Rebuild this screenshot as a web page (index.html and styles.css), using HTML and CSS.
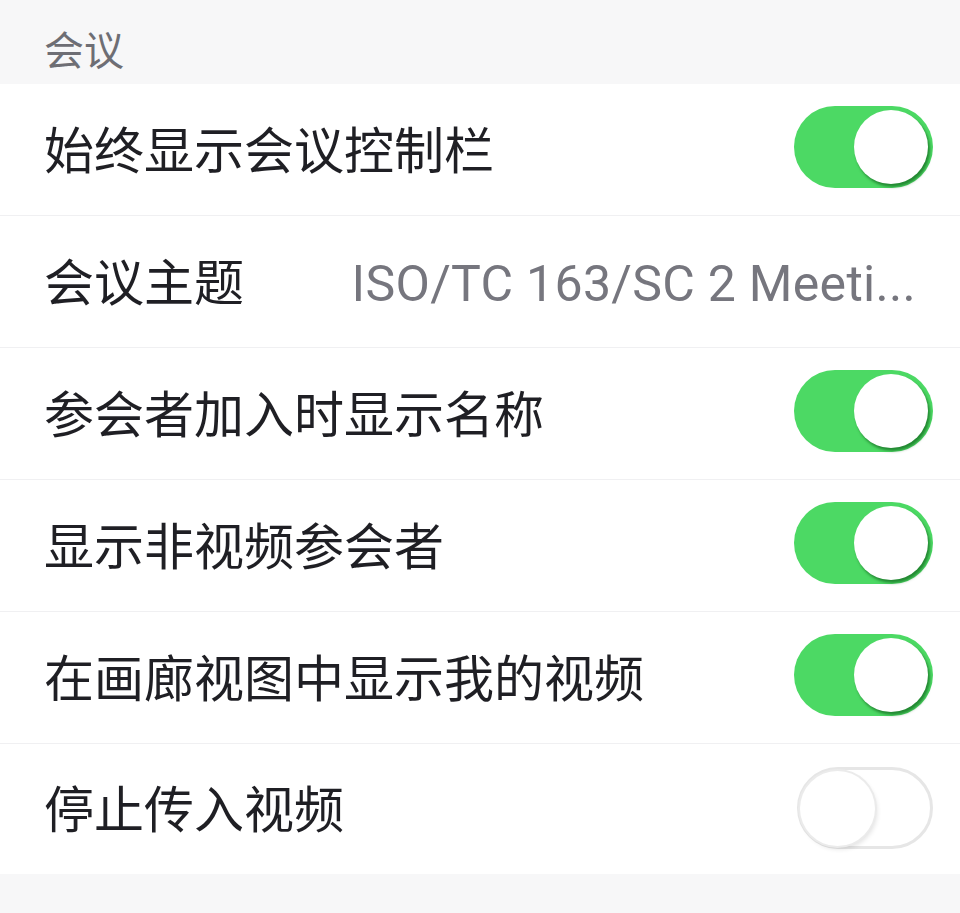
FILE: index.html
```html
<!DOCTYPE html>
<html lang="zh-CN">
<head>
<meta charset="utf-8">
<link rel="stylesheet" href="styles.css">
</head>
<body>
<div class="page">
  <div class="section-header">会议</div>
  <div class="list">
    <div class="row">
      <span class="label">始终显示会议控制栏</span>
      <span class="switch on"><span class="knob"></span></span>
    </div>
    <div class="row">
      <span class="label">会议主题</span>
      <span class="value">ISO/TC 163/SC 2 Meeti...</span>
    </div>
    <div class="row">
      <span class="label">参会者加入时显示名称</span>
      <span class="switch on"><span class="knob"></span></span>
    </div>
    <div class="row">
      <span class="label">显示非视频参会者</span>
      <span class="switch on"><span class="knob"></span></span>
    </div>
    <div class="row">
      <span class="label">在画廊视图中显示我的视频</span>
      <span class="switch on"><span class="knob"></span></span>
    </div>
    <div class="row last">
      <span class="label">停止传入视频</span>
      <span class="switch off"><span class="knob"></span></span>
    </div>
  </div>
</div>
</body>
</html>
```

FILE: styles.css
```css
html, body {
  margin: 0;
  padding: 0;
  background: #f7f7f8;
}
body {
  font-family: "Noto Sans CJK SC", "Noto Sans", sans-serif;
  width: 960px;
  height: 913px;
  overflow: hidden;
}
.page {
  display: flex;
  flex-direction: column;
}
.section-header {
  height: 84px;
  box-sizing: border-box;
  padding: 20px 0 0 44px;
  font-size: 40px;
  line-height: 56px;
  color: #6e6e74;
}
.list {
  background: #ffffff;
  display: flex;
  flex-direction: column;
}
.row {
  height: 132px;
  box-sizing: border-box;
  border-bottom: 1px solid #f0f0f2;
  display: flex;
  align-items: center;
  justify-content: space-between;
  padding: 0 27px 0 44px;
}
.row.last {
  border-bottom: none;
  height: 130px;
}
.label {
  font-size: 50px;
  color: #1f1f24;
  line-height: 60px;
  white-space: nowrap;
  margin-bottom: 6px;
}
.value {
  font-family: Roboto, "Noto Sans", sans-serif;
  font-size: 50px;
  color: #76767e;
  white-space: nowrap;
  margin-right: 17px;
  padding-top: 4px;
  letter-spacing: 0.3px;
}
.switch {
  position: relative;
  width: 139px;
  height: 82px;
  border-radius: 41px;
  box-sizing: border-box;
  flex: none;
  margin-bottom: 6px;
}
.switch.on {
  background: #4cd964;
}
.switch.off {
  background: #ffffff;
  border: 3px solid #e6e6e6;
  width: 136px;
  margin-right: 0;
  margin-bottom: 2px;
}
.knob {
  position: absolute;
  width: 74px;
  height: 74px;
  border-radius: 50%;
  background: #ffffff;
  top: 4px;
}
.switch.on .knob {
  right: 5px;
  box-shadow: 2px 3px 3px rgba(0, 70, 10, 0.55);
}
.switch.off .knob {
  left: 0px;
  top: 1px;
  width: 75px;
  height: 75px;
  box-shadow: 0 0 0 2px #ebebeb, 2px 3px 5px rgba(0, 0, 0, 0.12);
}
```
